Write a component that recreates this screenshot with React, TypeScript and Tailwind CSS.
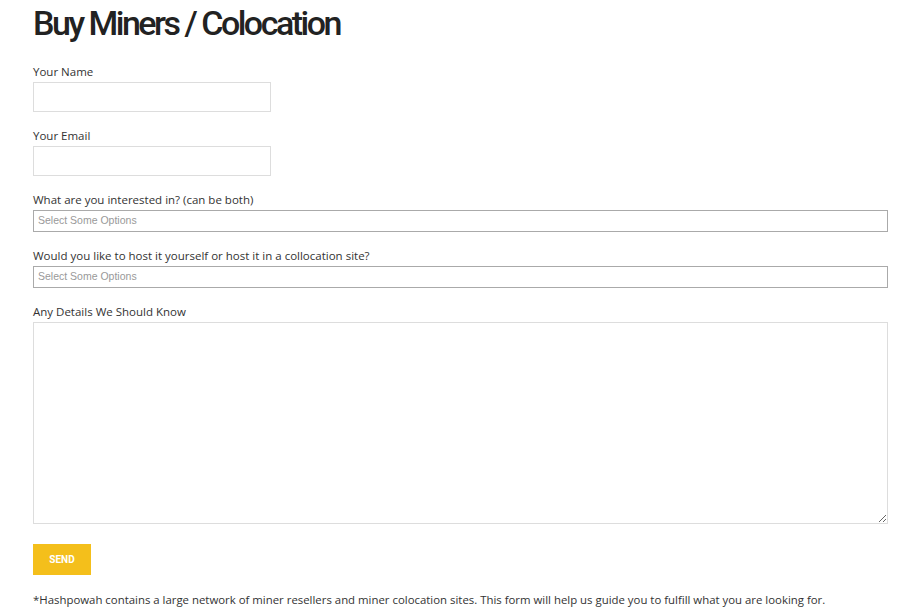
export default function App() {
    return (
        <div className="min-h-screen bg-white pl-[33px] pr-[30px] pt-[2px] text-[#333]">
            <h1 className="font-['Roboto',sans-serif] text-[34px] font-medium leading-[42px] tracking-[-2.5px] text-[#222]">
                Buy Miners / Colocation
            </h1>
            <form className="mt-[20px] flex flex-col font-['Open_Sans',sans-serif] text-[11.5px]">
                <label className="leading-[16px]">Your Name</label>
                <input className="mt-[2px] h-[30px] w-[238px] border border-[#ddd] outline-none" />
                <label className="mt-[16px] leading-[16px]">Your Email</label>
                <input className="mt-[2px] h-[30px] w-[238px] border border-[#ddd] outline-none" />
                <label className="mt-[16px] leading-[16px]">What are you interested in? (can be both)</label>
                <div className="mt-[2px] flex h-[22px] w-[855px] items-center border border-[#aaa] bg-white px-[4px] font-['Liberation_Sans',sans-serif] text-[10.5px] text-[#999]">
                    Select Some Options
                </div>
                <label className="mt-[16px] leading-[16px]">Would you like to host it yourself or host it in a collocation site?</label>
                <div className="mt-[2px] flex h-[22px] w-[855px] items-center border border-[#aaa] bg-white px-[4px] font-['Liberation_Sans',sans-serif] text-[10.5px] text-[#999]">
                    Select Some Options
                </div>
                <label className="mt-[16px] leading-[16px]">Any Details We Should Know</label>
                <textarea className="mt-[2px] h-[202px] w-[855px] border border-[#ddd] outline-none" />
                <button type="button" className="mt-[20px] h-[31px] w-[58px] bg-[#f4bf1b] font-['Roboto',sans-serif] text-[10px] font-bold text-white">
                    SEND
                </button>
                <p className="mt-[17px] text-[11.4px] leading-[16px]">
                    *Hashpowah contains a large network of miner resellers and miner colocation sites. This form will help us guide you to fulfill what you are looking for.
                </p>
            </form>
        </div>
    )
}
